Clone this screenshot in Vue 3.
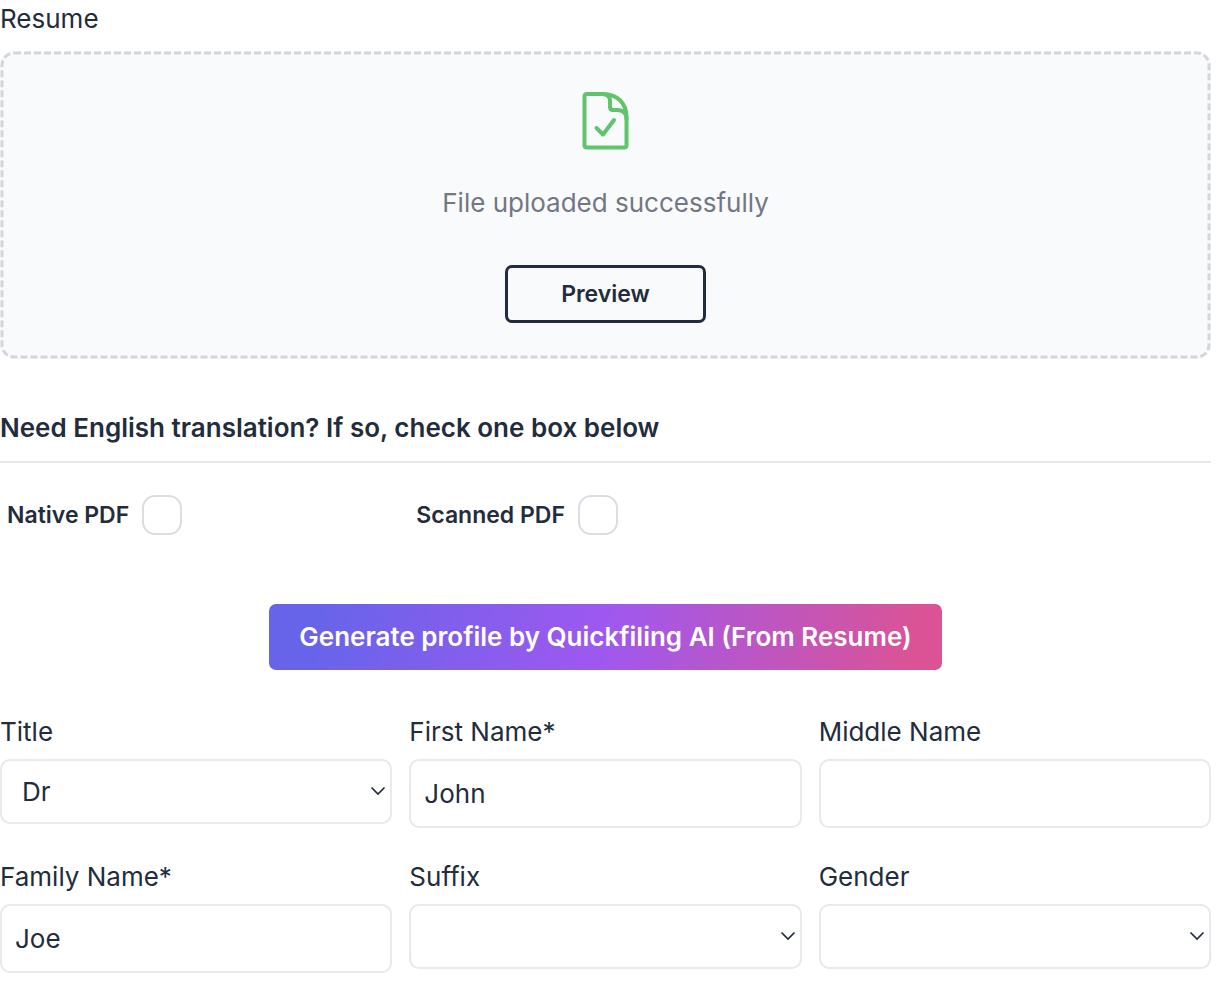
<script setup>
import { reactive } from 'vue'

const fields = reactive([
  { id: 'title', label: 'Title', type: 'select', value: 'Dr', options: ['', 'Dr', 'Mr', 'Mrs', 'Ms'] },
  { id: 'first-name', label: 'First Name*', type: 'text', value: 'John' },
  { id: 'middle-name', label: 'Middle Name', type: 'text', value: '' },
  { id: 'family-name', label: 'Family Name*', type: 'text', value: 'Joe' },
  { id: 'suffix', label: 'Suffix', type: 'select', value: '', options: ['', 'Jr', 'Sr'] },
  { id: 'gender', label: 'Gender', type: 'select', value: '', options: ['', 'Female', 'Male'] },
])

const translations = reactive([
  { id: 'native-pdf', label: 'Native PDF', checked: false },
  { id: 'scanned-pdf', label: 'Scanned PDF', checked: false },
])
</script>

<template>
  <main class="page">
    <section class="resume">
      <div class="label">Resume</div>
      <div class="dropzone">
        <svg class="dashes" aria-hidden="true"><rect class="dash-line" /></svg>
        <svg class="file-icon" viewBox="0 0 47 60" fill="none" stroke="#5fc46b" stroke-width="4" stroke-linecap="round" stroke-linejoin="round" aria-hidden="true">
          <path d="M5 4H21C35 4 44.5 13 44.5 27V55Q44.5 57.500 42 57.500H5Q2.5 57.500 2.5 55V6.500Q2.5 4 5 4Z" />
          <path d="M21 4Q28 5 28 10.500V17Q28 20 31 20H35Q44.500 20 44.500 29" />
          <path d="M14.500 38L21 44.500L32 30" />
        </svg>
        <p class="status">File uploaded successfully</p>
        <button type="button" class="preview">Preview</button>
      </div>
    </section>

    <section class="translation">
      <h2 class="heading">Need English translation? If so, check one box below</h2>
      <div class="columns checks">
        <div v-for="t in translations" :key="t.id" class="check">
          <label :for="t.id">{{ t.label }}</label>
          <input :id="t.id" v-model="t.checked" type="checkbox" />
        </div>
      </div>
    </section>

    <button type="button" class="generate">Generate profile by Quickfiling AI (From Resume)</button>

    <form class="columns fields" @submit.prevent>
      <div v-for="f in fields" :key="f.id" class="field">
        <label class="label" :for="f.id">{{ f.label }}</label>
        <div v-if="f.type === 'select'" class="select-wrap">
          <select :id="f.id" v-model="f.value" class="control">
            <option v-for="o in f.options" :key="o" :value="o">{{ o }}</option>
          </select>
          <svg class="chevron" viewBox="0 0 16 10" fill="none" stroke="#232c3b" stroke-width="1.7" aria-hidden="true">
            <path d="M1.500 1.500L8 8L14.500 1.500" />
          </svg>
        </div>
        <input v-else :id="f.id" v-model="f.value" class="control" type="text" />
      </div>
    </form>
  </main>
</template>

<style>
body {
  margin: 0;
  background: #fff;
}
</style>

<style scoped>
.page {
  display: flex;
  flex-direction: column;
  padding-right: 16px;
  font-family: Inter, "Liberation Sans", sans-serif;
  font-size: 26px;
  line-height: 38px;
  color: #232c3b;
}

.page * {
  box-sizing: border-box;
}

button,
input,
select {
  margin: 0;
  font: inherit;
  color: inherit;
}

.label {
  display: block;
}

.dropzone {
  position: relative;
  display: flex;
  flex-direction: column;
  align-items: center;
  margin-top: 13px;
  padding: 39px 40px 36px;
  border-radius: 13px;
  background: #f9fafc;
}

.dashes {
  position: absolute;
  inset: 0;
  width: 100%;
  height: 100%;
}

.dash-line {
  x: 2px;
  y: 2px;
  width: calc(100% - 4px);
  height: calc(100% - 4px);
  rx: 12px;
  fill: none;
  stroke: #d4d6dc;
  stroke-width: 3px;
  stroke-dasharray: 7 3;
}

.file-icon {
  position: relative;
  width: 47px;
  height: 60px;
}

.status {
  position: relative;
  margin: 34px 0 43px;
  color: #737782;
}

.preview {
  position: relative;
  width: 201px;
  height: 58px;
  border: 3px solid #232c3b;
  border-radius: 7px;
  background: transparent;
  font-size: 23px;
  font-weight: 600;
}

.heading {
  margin: 50px 0 0;
  padding-bottom: 14px;
  border-bottom: 2px solid #e6e6ec;
  font-size: 26px;
  font-weight: 600;
}

.columns {
  display: grid;
  grid-template-columns: repeat(3, minmax(0, 1fr));
  column-gap: 17px;
}

.checks {
  margin-top: 32px;
}

.check {
  display: flex;
  align-items: center;
  gap: 13px;
  padding-left: 7px;
  font-size: 23px;
  font-weight: 600;
}

.check input {
  appearance: none;
  width: 40px;
  height: 40px;
  border: 2px solid #dcdde3;
  border-radius: 13px;
  background: #fff;
}

.check input:checked {
  background: #6366f1;
}

.generate {
  align-self: center;
  height: 66px;
  margin-top: 69px;
  padding: 0 30px;
  border: 0;
  border-radius: 7px;
  background: linear-gradient(100deg, #6864ea 8%, #9f58ef 50%, #db5394 96%);
  color: #fff;
  font-weight: 600;
}

.fields {
  row-gap: 30px;
  margin-top: 43px;
}

.field .label {
  margin-bottom: 8px;
}

.control {
  display: block;
  width: 100%;
  height: 69px;
  padding: 0 13px;
  border: 2px solid #e8e8ed;
  border-radius: 10px;
  background: #fff;
}

.select-wrap {
  position: relative;
}

select.control {
  appearance: none;
  height: 65px;
  padding: 0 40px 0 20px;
}

.chevron {
  position: absolute;
  top: 27px;
  right: 6px;
  width: 16px;
  height: 10px;
  pointer-events: none;
}
</style>
